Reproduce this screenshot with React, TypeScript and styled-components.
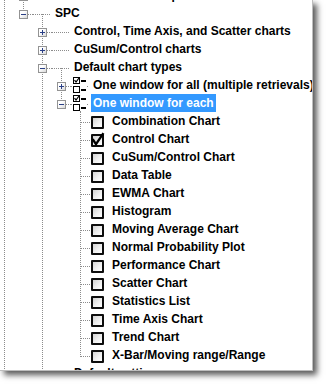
import React from 'react';
import styled, { createGlobalStyle, css } from 'styled-components';

const GlobalStyle = createGlobalStyle`
  html, body { margin: 0; padding: 0; background: #ffffff; }
  body { width: 328px; height: 388px; overflow: hidden; }
`;

const DOT = '#8c8c8c';

const vDots = css`
  background-image: linear-gradient(to bottom, ${DOT} 50%, transparent 50%);
  background-size: 1px 2px;
`;
const hDots = css`
  background-image: linear-gradient(to right, ${DOT} 50%, transparent 50%);
  background-size: 2px 1px;
`;

const Page = styled.div`
  width: 328px;
  height: 388px;
  background: #fff;
`;

const Viewport = styled.div`
  width: 313px;
  height: 371px;
  box-sizing: border-box;
  overflow: hidden;
  background: #fff;
  border-right: 1px solid #bdbdbd;
  border-bottom: 1px solid #bdbdbd;
  box-shadow: 4px 4px 6px rgba(0, 0, 0, 0.65);
`;

const Tree = styled.div`
  margin: -14px 0 0 -5px;
  font-family: "Liberation Sans", Arial, sans-serif;
  font-weight: bold;
  font-size: 12px;
  color: #000;
`;

const Row = styled.div`
  display: flex;
  align-items: flex-start;
  height: 18px;
`;

type Guide = 'none' | 'full' | 'top';

const Cell = styled.span<{ $v: Guide; $h?: boolean }>`
  position: relative;
  flex: none;
  width: 19px;
  height: 18px;
  &::before {
    content: '';
    display: ${(p) => (p.$v === 'none' ? 'none' : 'block')};
    position: absolute;
    left: 9px;
    top: 0;
    width: 1px;
    height: ${(p) => (p.$v === 'full' ? '18px' : '11px')};
    ${vDots}
  }
  &::after {
    content: '';
    display: ${(p) => (p.$h ? 'block' : 'none')};
    position: absolute;
    left: 10px;
    right: 0;
    top: 10px;
    height: 1px;
    ${hDots}
  }
`;

const Expander = styled.span<{ $open: boolean }>`
  position: absolute;
  z-index: 1;
  left: 5px;
  top: 6px;
  width: 9px;
  height: 9px;
  box-sizing: border-box;
  border: 1px solid #939393;
  background: linear-gradient(135deg, #ffffff 35%, #d8d8d8 100%);
  &::before {
    content: '';
    position: absolute;
    left: 1px;
    top: 3px;
    width: 5px;
    height: 1px;
    background: #2a3f86;
  }
  &::after {
    content: '';
    display: ${(p) => (p.$open ? 'none' : 'block')};
    position: absolute;
    left: 3px;
    top: 1px;
    width: 1px;
    height: 5px;
    background: #2a3f86;
  }
`;

const Slot = styled.span<{ $h?: boolean; $down?: number }>`
  position: relative;
  flex: none;
  display: flex;
  align-items: flex-start;
  width: 18px;
  height: 18px;
  &::before {
    content: '';
    display: ${(p) => (p.$h ? 'block' : 'none')};
    position: absolute;
    left: 0;
    right: 0;
    top: 10px;
    height: 1px;
    ${hDots}
  }
  &::after {
    content: '';
    display: ${(p) => (p.$down !== undefined ? 'block' : 'none')};
    position: absolute;
    left: 9px;
    top: ${(p) => p.$down ?? 0}px;
    bottom: 0;
    width: 1px;
    ${vDots}
  }
`;

const Checkbox = styled.span`
  position: relative;
  z-index: 1;
  flex: none;
  margin: 4px 0 0 1px;
  width: 13px;
  height: 13px;
  box-sizing: border-box;
  border: 2px solid #0d0d0d;
  border-radius: 1px;
  background: linear-gradient(135deg, #d2d2d2 0%, #efefef 55%, #ffffff 100%);
  & > svg {
    position: absolute;
    left: -2px;
    top: -2px;
    overflow: visible;
  }
`;

const StateIcon = styled.svg`
  position: relative;
  z-index: 1;
  flex: none;
  margin: 1px 0 0 2px;
  background: #fff;
`;

const Label = styled.span<{ $selected?: boolean }>`
  flex: none;
  margin-left: 2px;
  padding: 0 2px;
  height: 18px;
  line-height: 18px;
  white-space: nowrap;
  background: ${(p) => (p.$selected ? '#3399ff' : 'transparent')};
  color: ${(p) => (p.$selected ? '#ffffff' : '#000000')};
`;

type Kind = 'plain' | 'state' | 'check';

interface Node {
  text: string;
  guides: Guide[];
  own: Guide;
  expander?: 'plus' | 'minus';
  kind: Kind;
  checked?: boolean;
  selected?: boolean;
  down?: number;
}

const L4 = [
  'Combination Chart',
  'Control Chart',
  'CuSum/Control Chart',
  'Data Table',
  'EWMA Chart',
  'Histogram',
  'Moving Average Chart',
  'Normal Probability Plot',
  'Performance Chart',
  'Scatter Chart',
  'Statistics List',
  'Time Axis Chart',
  'Trend Chart',
  'X-Bar/Moving range/Range',
];

const nodes: Node[] = [
  { text: 'Chart Windows Setup', guides: ['full'], own: 'full', expander: 'plus', kind: 'plain' },
  { text: 'SPC', guides: ['full'], own: 'top', expander: 'minus', kind: 'plain', down: 10 },
  { text: 'Control, Time Axis, and Scatter charts', guides: ['full', 'none'], own: 'full', expander: 'plus', kind: 'plain' },
  { text: 'CuSum/Control charts', guides: ['full', 'none'], own: 'full', expander: 'plus', kind: 'plain' },
  { text: 'Default chart types', guides: ['full', 'none'], own: 'full', expander: 'minus', kind: 'plain', down: 10 },
  { text: 'One window for all (multiple retrievals)', guides: ['full', 'none', 'full'], own: 'full', expander: 'plus', kind: 'state' },
  { text: 'One window for each', guides: ['full', 'none', 'full'], own: 'top', expander: 'minus', kind: 'state', selected: true, down: 17 },
  ...L4.map<Node>((t, i) => ({
    text: t,
    guides: ['full', 'none', 'full', 'none'],
    own: i === L4.length - 1 ? 'top' : 'full',
    kind: 'check',
    checked: t === 'Control Chart',
  })),
  { text: 'Default settings', guides: ['full', 'none'], own: 'full', kind: 'plain' },
];

const StateGlyph: React.FC = () => (
  <StateIcon width={14} height={16} viewBox="0 0 14 16">
    <rect x={0.5} y={0.5} width={6} height={6} fill="#fff" stroke="#000" strokeWidth={1} />
    <path d="M1.5 3.2 L3 5 L6.8 0" fill="none" stroke="#000" strokeWidth={1.2} />
    <rect x={8} y={3} width={5} height={2} fill="#000" />
    <rect x={0.5} y={9.5} width={6} height={6} fill="#fff" stroke="#000" strokeWidth={1} />
    <rect x={8} y={12} width={5} height={2} fill="#000" />
  </StateIcon>
);

const CheckMark: React.FC = () => (
  <svg width={13} height={13} viewBox="0 0 13 13">
    <path d="M2.2 6 L5 10.2 L11.8 0" fill="none" stroke="#000" strokeWidth={2.3} strokeLinecap="square" strokeLinejoin="miter" />
  </svg>
);

const TreeRow: React.FC<{ node: Node }> = ({ node }) => {
  const hasLineInSlot = node.kind === 'plain' || node.kind === 'state';
  return (
    <Row>
      {node.guides.map((g, i) => (
        <Cell key={i} $v={g} />
      ))}
      <Cell $v={node.own} $h>
        {node.expander && <Expander $open={node.expander === 'minus'} />}
      </Cell>
      <Slot $h={hasLineInSlot} $down={node.down}>
        {node.kind === 'state' && <StateGlyph />}
        {node.kind === 'check' && <Checkbox>{node.checked && <CheckMark />}</Checkbox>}
      </Slot>
      <Label $selected={node.selected}>{node.text}</Label>
    </Row>
  );
};

export default function App() {
  return (
    <Page>
      <GlobalStyle />
      <Viewport>
        <Tree>
          {nodes.map((n, i) => (
            <TreeRow key={i} node={n} />
          ))}
        </Tree>
      </Viewport>
    </Page>
  );
}
